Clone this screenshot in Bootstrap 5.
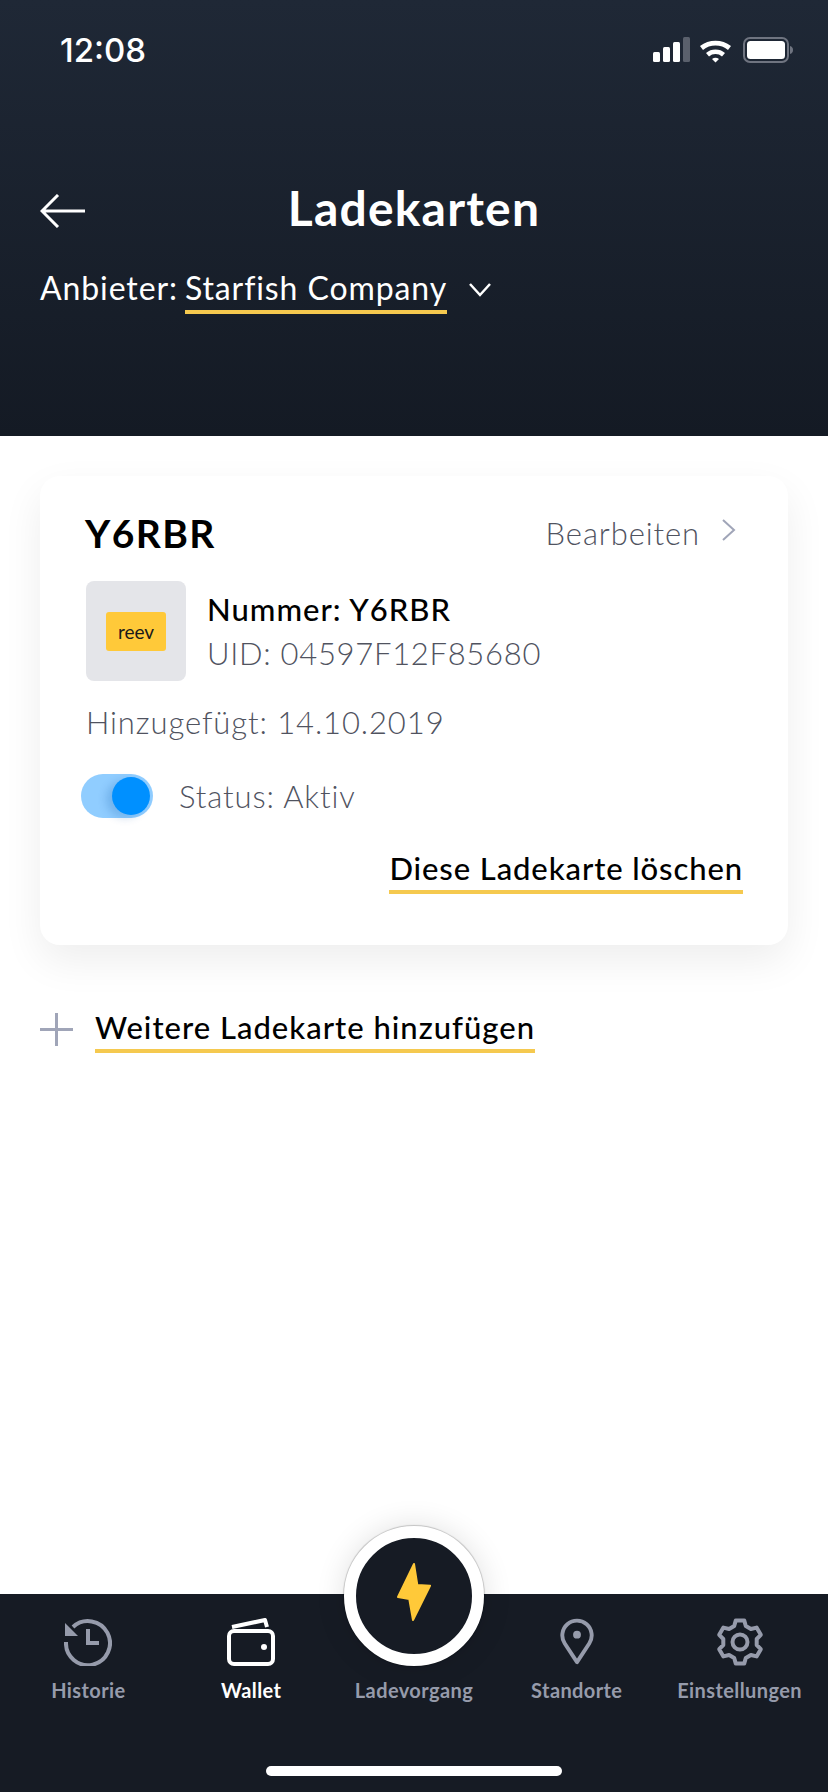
<!DOCTYPE html>
<html lang="de">
<head>
  <meta charset="UTF-8" />
  <meta name="viewport" content="width=device-width, initial-scale=1" />
  <link href="https://cdn.jsdelivr.net/npm/bootstrap@5.3.1/dist/css/bootstrap.min.css" rel="stylesheet" crossorigin="anonymous" />
  <title>Ladekarten</title>
  <style>
    body {
      font-family: "Lato", "Open Sans", sans-serif;
      background-color: #fff;
      color: #000;
    }
    .app-page { width: 828px; height: 1792px; overflow: hidden; }
    .top-head {
      height: 436px;
      padding: 0 40px;
      background: linear-gradient(180deg, #1f2836 0%, #141a24 100%);
      color: #fff;
    }
    .status-row { height: 100px; padding-left: 20px; margin-right: -6px; }
    .status-time { font-family: "Inter", sans-serif; font-size: 33px; font-weight: 500; line-height: 1; }
    .title-row { display: grid; grid-template-columns: 1fr auto 1fr; align-items: center; margin-top: 80px; }
    .page-title { font-size: 48px; font-weight: 700; letter-spacing: 1.2px; line-height: 56px; margin: 0; padding-bottom: 6px; }
    .supplier-row { margin-top: 24px; font-size: 32px; letter-spacing: .9px; line-height: 44px; }
    .supplier-name { margin-left: 7px; }
    .supplier-chevron { margin-left: 22px; align-self: center; }
    .yellow-line { border-bottom: 4px solid #f5c94f; }
    .yellow-dark { color: #000; font-size: 31px; font-weight: 500; letter-spacing: 1px; line-height: 44px; }
    .main-area { padding: 40px 40px 0; }
    .card-box { height: 469px; border-radius: 20px; padding: 32px 46px 0 45px; box-shadow: 0 16px 40px rgba(0, 0, 0, .07); }
    .card-name { font-size: 39px; font-weight: 700; letter-spacing: 1.4px; line-height: 50px; margin: 0; }
    .grey-text { color: #50535f; font-size: 31px; font-weight: 300; letter-spacing: .9px; line-height: 44px; }
    .uid-line { letter-spacing: .7px; }
    .edit-row { gap: 21px; }
    .edit-chevron { margin: 0 6px 6px 0; }
    .card-info { margin-top: 23px; margin-left: 1px; gap: 21px; }
    .added-line { margin-top: 19px; margin-left: 1px; }
    .status-line { margin-top: 30px; gap: 26px; }
    .delete-line { margin-top: 28px; margin-right: -1px; }
    .delete-line .yellow-dark { letter-spacing: .9px; }
    .logo-tile { width: 100px; height: 100px; background: #e4e5e9; border-radius: 8px; }
    .logo-chip { width: 60px; height: 39px; background: #ffc939; border-radius: 3px; color: #1a1a1a; font-size: 19px; line-height: 1; }
    .toggle-track { width: 72px; height: 44px; background: #90cdff; border-radius: 22px; margin-left: -4px; padding: 3px 3px 3px 0; }
    .toggle-knob { width: 38px; height: 38px; background: #0090ff; border-radius: 50%; box-shadow: -6px 3px 8px rgba(0, 80, 160, .2); }
    .add-row { margin-top: 60px; gap: 22px; }
    .bottom-bar { height: 198px; background: #161b24; padding: 24px 7px 0; display: grid; grid-template-columns: repeat(5, 1fr); }
    .tab-item { color: #969bab; font-size: 20px; font-weight: 700; letter-spacing: .4px; line-height: 24px; }
    .tab-item.tab-on { color: #fff; }
    .tab-icon { height: 48px; margin-bottom: 12px; }
    .charge-btn {
      position: absolute; left: 344px; top: -68px;
      width: 140px; height: 140px; border-radius: 50%;
      background: #161b24; border: 12px solid #fff;
      box-shadow: 0 0 1px 1px rgba(0, 0, 0, .2), 0 0 30px rgba(0, 0, 0, .12);
    }
    .home-bar { position: absolute; left: 266px; top: 172px; width: 296px; height: 10px; background: #fff; border-radius: 5px; }
  </style>
</head>
<body>
  <div class="app-page d-flex flex-column">
    <header class="top-head">
      <div class="status-row d-flex justify-content-between align-items-center">
        <span class="status-time">12:08</span>
        <svg width="141" height="26" viewBox="0 0 141 26" fill="none">
          <rect x="0" y="15" width="7" height="10" rx="1.5" fill="#fff"/>
          <rect x="10" y="10" width="7" height="15" rx="1.5" fill="#fff"/>
          <rect x="20" y="5" width="7" height="20" rx="1.5" fill="#fff"/>
          <rect x="30" y="0" width="7" height="25" rx="1.5" fill="#5a606c"/>
          <path d="M47 9a26 26 0 0 1 31 0l-3 4a20 20 0 0 0-25 0z" fill="#fff"/>
          <path d="M53 16a15 15 0 0 1 19 0l-3 3.500a10 10 0 0 0-13 0z" fill="#fff"/>
          <path d="M59 22a6 6 0 0 1 7 0l-3.500 3.500z" fill="#fff"/>
          <rect x="91" y="1" width="44" height="24" rx="6" stroke="#6f7480" stroke-width="2"/>
          <rect x="94" y="4" width="38" height="18" rx="3.500" fill="#fff"/>
          <path d="M137 9c2 .5 3 2 3 4s-1 3.500-3 4z" fill="#6f7480"/>
        </svg>
      </div>
      <div class="title-row">
        <svg width="45" height="34" viewBox="0 0 45 34" fill="none" stroke="#fff" stroke-width="3">
          <path d="M45 17H2M18 1 2 17l16 16"/>
        </svg>
        <h1 class="page-title">Ladekarten</h1>
      </div>
      <div class="supplier-row d-flex align-items-baseline">
        <span>Anbieter:</span>
        <span class="yellow-line supplier-name">Starfish Company</span>
        <svg class="supplier-chevron" width="22" height="14" viewBox="0 0 22 14" fill="none" stroke="#fff" stroke-width="2.500">
          <path d="M1 1l10 11L21 1"/>
        </svg>
      </div>
    </header>

    <main class="main-area flex-grow-1">
      <div class="card-box card border-0">
        <div class="d-flex justify-content-between align-items-center">
          <h2 class="card-name">Y6RBR</h2>
          <div class="edit-row d-flex align-items-center">
            <span class="grey-text">Bearbeiten</span>
            <svg class="edit-chevron" width="15" height="22" viewBox="0 0 15 22" fill="none" stroke="#a0a5b8" stroke-width="2">
              <path d="M2 1l11 10L2 21"/>
            </svg>
          </div>
        </div>
        <div class="card-info d-flex align-items-center">
          <div class="logo-tile d-flex align-items-center justify-content-center">
            <div class="logo-chip d-flex align-items-center justify-content-center">reev</div>
          </div>
          <div>
            <div class="yellow-dark">Nummer: Y6RBR</div>
            <div class="grey-text uid-line">UID: 04597F12F85680</div>
          </div>
        </div>
        <div class="grey-text added-line">Hinzugefügt: 14.10.2019</div>
        <div class="status-line d-flex align-items-center">
          <div class="toggle-track d-flex justify-content-end"><div class="toggle-knob"></div></div>
          <span class="grey-text">Status: Aktiv</span>
        </div>
        <div class="delete-line d-flex justify-content-end">
          <span class="yellow-dark yellow-line">Diese Ladekarte löschen</span>
        </div>
      </div>
      <div class="add-row d-flex align-items-center">
        <svg width="33" height="33" viewBox="0 0 33 33" stroke="#a0a5b8" stroke-width="3"><path d="M0 16.500h33M16.500 0v33"/></svg>
        <span class="yellow-dark yellow-line">Weitere Ladekarte hinzufügen</span>
      </div>
    </main>

    <nav class="bottom-bar position-relative text-center">
      <div class="tab-item">
        <svg class="tab-icon d-block mx-auto" width="48" height="48" viewBox="0 0 48 48" fill="none" stroke="currentColor" stroke-width="4">
          <path d="M9 9A22 22 0 1 1 2 24"/>
          <path d="M1 5v13h13z" fill="currentColor" stroke="none"/>
          <path d="M24 11v14h11"/>
        </svg>
        Historie
      </div>
      <div class="tab-item tab-on">
        <svg class="tab-icon d-block mx-auto" width="48" height="48" viewBox="0 0 48 48" fill="none" stroke="currentColor" stroke-width="4">
          <rect x="2" y="13" width="44" height="33" rx="5"/>
          <path d="M5 9l33-7 2 7" stroke-linejoin="round"/>
          <circle cx="37" cy="29" r="3" fill="currentColor" stroke="none"/>
        </svg>
        Wallet
      </div>
      <div class="tab-item">
        <div class="tab-icon"></div>
        Ladevorgang
      </div>
      <div class="tab-item">
        <svg class="tab-icon d-block mx-auto" width="34" height="48" viewBox="0 0 34 49" fill="none" stroke="currentColor" stroke-width="4">
          <path d="M17 45 4.500 26A15 15 0 1 1 29.500 26z" stroke-linejoin="round"/>
          <circle cx="17" cy="17" r="4" fill="currentColor" stroke="none"/>
        </svg>
        Standorte
      </div>
      <div class="tab-item">
        <svg class="tab-icon d-block mx-auto" width="48" height="48" viewBox="0 0 48 48" fill="none" stroke="currentColor" stroke-width="4" stroke-linejoin="round">
          <path d="M19.800 2.400h8.400l1.600 5.600 5.100 3 5.700-1.400 4.200 7.200-4.100 4.200v6l4.100 4.200-4.200 7.200-5.700-1.400-5.100 3-1.600 5.600h-8.400L18.200 40l-5.100-3-5.700 1.400-4.200-7.200L7.300 27v-6l-4.100-4.200 4.200-7.200 5.700 1.400 5.100-3z"/>
          <circle cx="24" cy="24" r="7.500"/>
        </svg>
        Einstellungen
      </div>
      <div class="charge-btn d-flex align-items-center justify-content-center">
        <svg class="mb-2" width="34" height="58" viewBox="-1 -1 34 58"><path d="M16 0 0 33l11.300 2L15 56 32 21.700 19.300 21z" fill="#ffc939" stroke="#ffc939" stroke-width="2" stroke-linejoin="round"/></svg>
      </div>
      <div class="home-bar"></div>
    </nav>
  </div>
  <script src="https://cdn.jsdelivr.net/npm/bootstrap@5.3.1/dist/js/bootstrap.bundle.min.js"></script>
</body>
</html>
